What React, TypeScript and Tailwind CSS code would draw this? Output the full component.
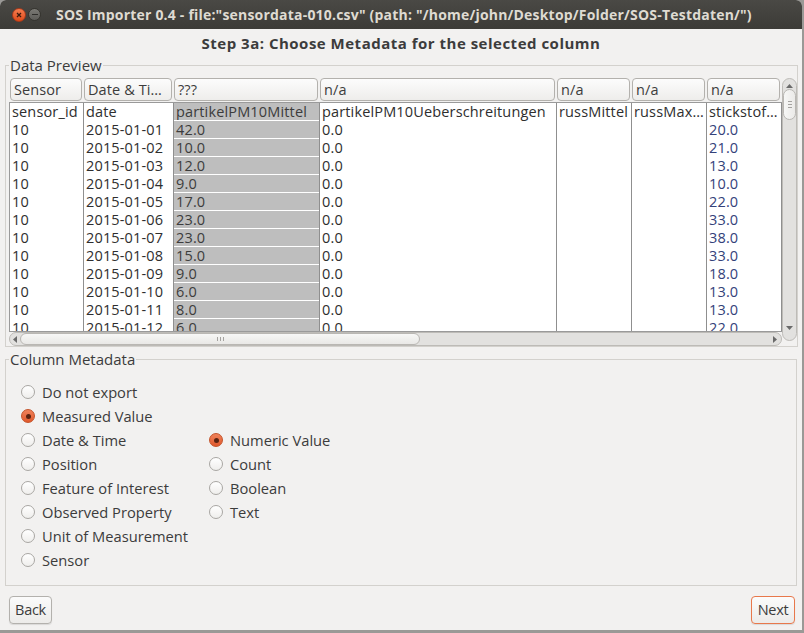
import React from "react";

const rows: string[][] = [
  ["sensor_id", "date", "partikelPM10Mittel", "partikelPM10Ueberschreitungen", "russMittel", "russMax…", "stickstof…"],
  ["10", "2015-01-01", "42.0", "0.0", "", "", "20.0"],
  ["10", "2015-01-02", "10.0", "0.0", "", "", "21.0"],
  ["10", "2015-01-03", "12.0", "0.0", "", "", "13.0"],
  ["10", "2015-01-04", "9.0", "0.0", "", "", "10.0"],
  ["10", "2015-01-05", "17.0", "0.0", "", "", "22.0"],
  ["10", "2015-01-06", "23.0", "0.0", "", "", "33.0"],
  ["10", "2015-01-07", "23.0", "0.0", "", "", "38.0"],
  ["10", "2015-01-08", "15.0", "0.0", "", "", "33.0"],
  ["10", "2015-01-09", "9.0", "0.0", "", "", "18.0"],
  ["10", "2015-01-10", "6.0", "0.0", "", "", "13.0"],
  ["10", "2015-01-11", "8.0", "0.0", "", "", "13.0"],
  ["10", "2015-01-12", "6.0", "0.0", "", "", "22.0"],
];

const headers = ["Sensor", "Date & Ti…", "???", "n/a", "n/a", "n/a", "n/a"];
const widths = ["w-[74px]", "w-[90px]", "w-[146px]", "w-[237px]", "w-[75px]", "w-[75px]", "w-[75px]"];

function Radio({ checked, label }: { checked?: boolean; label: string }) {
  return (
    <div className="flex items-center h-[24px]">
      {checked ? (
        <div className="shrink-0 w-[14px] h-[14px] rounded-full border border-[#c4532a] bg-gradient-to-b from-[#f0825a] to-[#e0582a] flex items-center justify-center">
          <div className="w-[5px] h-[5px] rounded-full bg-[#5a2311]" />
        </div>
      ) : (
        <div className="shrink-0 w-[14px] h-[14px] rounded-full border border-[#a9a7a3] bg-gradient-to-b from-[#ffffff] to-[#efeeec]" />
      )}
      <span className="ml-[7px] text-[14.7px] text-[#3c3c3c] leading-none whitespace-nowrap">{label}</span>
    </div>
  );
}

function ArrowUp() {
  return (
    <svg width="7" height="4" viewBox="0 0 7 4"><polygon points="0,4 7,4 3.5,0" fill="#6a6a6a" /></svg>
  );
}
function ArrowDown() {
  return (
    <svg width="7" height="4" viewBox="0 0 7 4"><polygon points="0,0 7,0 3.5,4" fill="#6a6a6a" /></svg>
  );
}
function ArrowLeft() {
  return (
    <svg width="4" height="7" viewBox="0 0 4 7"><polygon points="4,0 4,7 0,3.5" fill="#6a6a6a" /></svg>
  );
}
function ArrowRight() {
  return (
    <svg width="4" height="7" viewBox="0 0 4 7"><polygon points="0,0 0,7 4,3.5" fill="#6a6a6a" /></svg>
  );
}

export default function App() {
  return (
    <div className="w-[804px] h-[633px] bg-[#9a9996] font-['Open_Sans',sans-serif]">
      <div className="w-[802px] h-[630px] bg-[#f2f1f0] flex flex-col rounded-t-[6px] overflow-hidden">
        {/* Title bar */}
        <div className="h-[29px] shrink-0 bg-gradient-to-b from-[#4a4945] to-[#3c3b37] flex items-center">
          <div className="shrink-0 ml-[12px] w-[14px] h-[14px] rounded-full bg-gradient-to-b from-[#f47c4e] to-[#de4a17] border border-[#a8391a] flex items-center justify-center">
            <svg width="6" height="6" viewBox="0 0 6 6">
              <path d="M1 1 L5 5 M5 1 L1 5" stroke="#3a1a0e" strokeWidth="1.3" />
            </svg>
          </div>
          <div className="shrink-0 ml-[2px] w-[13px] h-[13px] rounded-full bg-gradient-to-b from-[#7a7974] to-[#5e5d59] border border-[#35342f] flex items-center justify-center">
            <div className="w-[6px] h-[1.5px] bg-[#2e2d2a]" />
          </div>
          <div className="shrink-0 ml-[15px] text-[14px] tracking-[0.2px] font-bold text-[#dfdbd2] whitespace-nowrap">
            SOS Importer 0.4 - file:"sensordata-010.csv" (path: "/home/john/Desktop/Folder/SOS-Testdaten/")
          </div>
        </div>

        {/* Step header */}
        <div className="h-[27px] shrink-0 flex items-center justify-center pt-[2px] text-[15px] tracking-[0.5px] font-bold text-[#3c3c3c]">
          Step 3a: Choose Metadata for the selected column
        </div>

        {/* Data Preview */}
        <fieldset className="mx-[5px] border border-[#d3d1cd] pl-[3px] pr-[0px] pb-[0px]">
          <legend className="ml-[0px] px-[1px] text-[15px] leading-[19px] text-[#3c3c3c]">Data Preview</legend>
          <div className="flex pt-[3px]">
            <div className="w-[773px] flex flex-col">
              {/* Header combos */}
              <div className="flex h-[23px] pl-[1px]">
                {headers.map((h, i) => (
                  <div key={i} className={`${widths[i]} pr-[2px] h-full`}>
                    <div className="h-full rounded-[4px] border border-[#b3b1ad] bg-gradient-to-b from-[#fcfcfc] to-[#eeedeb] flex items-center pl-[3px] text-[14.5px] tracking-[0.1px] text-[#3c3c3c] whitespace-nowrap overflow-hidden">
                      {h}
                    </div>
                  </div>
                ))}
              </div>
              {/* Body */}
              <div className="mt-[1px] h-[229px] border-l border-t border-[#9a9a9a] bg-white overflow-hidden flex">
                {widths.map((w, c) => (
                  <div
                    key={c}
                    className={`${w} shrink-0 border-r border-[#8f8f8f] ${c === 2 ? "bg-[#bebebe]" : ""}`}
                  >
                    {rows.map((r, ri) => (
                      <div
                        key={ri}
                        className={`h-[18px] pl-[2px] text-[14.5px] tracking-[0.15px] leading-[17px] whitespace-nowrap overflow-hidden ${
                          c === 2 ? "border-b border-white text-[#3c3c3c]" : c === 6 && ri > 0 ? "text-[#34427a]" : "text-[#2e2e2e]"
                        }`}
                      >
                        {r[c]}
                      </div>
                    ))}
                  </div>
                ))}
              </div>
              {/* Horizontal scrollbar */}
              <div className="h-[15px] border-t border-[#9a9a9a] flex items-center">
                <div className="h-[14px] w-full rounded-full border border-[#bdbbb7] bg-[#e2e1df] flex items-center">
                  <div className="w-[10px] flex justify-center shrink-0">
                    <ArrowLeft />
                  </div>
                  <div className="w-[400px] h-[12px] rounded-full border border-[#b9b7b3] bg-gradient-to-b from-[#f7f7f6] to-[#e9e8e6] flex items-center justify-center">
                    <div className="flex gap-[2px]">
                      <div className="w-[1px] h-[4px] bg-[#a5a3a0]" />
                      <div className="w-[1px] h-[4px] bg-[#a5a3a0]" />
                      <div className="w-[1px] h-[4px] bg-[#a5a3a0]" />
                    </div>
                  </div>
                  <div className="flex-1" />
                  <div className="w-[12px] flex justify-center shrink-0">
                    <ArrowRight />
                  </div>
                </div>
              </div>
            </div>
            {/* Vertical scrollbar */}
            <div className="w-[15px] h-[263px] rounded-full border border-[#bdbbb7] bg-[#e2e1df] flex flex-col items-center">
              <div className="h-[10px] flex items-end pb-[1px]">
                <ArrowUp />
              </div>
              <div className="w-[13px] h-[31px] rounded-full border border-[#b9b7b3] bg-gradient-to-r from-[#f7f7f6] to-[#ebeae8] flex items-center justify-center">
                <div className="flex flex-col gap-[2px]">
                  <div className="w-[4px] h-[1px] bg-[#a5a3a0]" />
                  <div className="w-[4px] h-[1px] bg-[#a5a3a0]" />
                  <div className="w-[4px] h-[1px] bg-[#a5a3a0]" />
                </div>
              </div>
              <div className="flex-1" />
              <div className="h-[16px] flex items-start pt-[2px]">
                <ArrowDown />
              </div>
            </div>
          </div>
        </fieldset>

        {/* Column Metadata */}
        <fieldset className="mx-[5px] mt-[3px] h-[236px] border border-[#d3d1cd] pl-[15px] pt-[11px]">
          <legend className="ml-[-12px] px-[1px] text-[15px] leading-[19px] text-[#3c3c3c]">Column Metadata</legend>
          <div className="grid grid-cols-[188px_200px]">
            <Radio label="Do not export" />
            <div />
            <Radio label="Measured Value" checked />
            <div />
            <Radio label="Date & Time" />
            <Radio label="Numeric Value" checked />
            <Radio label="Position" />
            <Radio label="Count" />
            <Radio label="Feature of Interest" />
            <Radio label="Boolean" />
            <Radio label="Observed Property" />
            <Radio label="Text" />
            <Radio label="Unit of Measurement" />
            <div />
            <Radio label="Sensor" />
            <div />
          </div>
        </fieldset>

        {/* Buttons */}
        <div className="flex justify-between pl-[9px] pr-[7px] mt-[10px]">
          <button className="w-[43px] h-[28px] rounded-[4px] border border-[#b3b1ad] bg-gradient-to-b from-[#fbfbfb] to-[#ecebe9] text-[14.5px] tracking-[-0.3px] text-[#3c3c3c] shadow-[0_1px_1px_rgba(0,0,0,0.1)]">
            Back
          </button>
          <button className="w-[44px] h-[28px] rounded-[4px] border border-[#e8784b] bg-gradient-to-b from-[#fbfbfb] to-[#ecebe9] text-[14.5px] tracking-[-0.3px] text-[#3c3c3c] shadow-[0_1px_1px_rgba(0,0,0,0.1)]">
            Next
          </button>
        </div>
      </div>
    </div>
  );
}
